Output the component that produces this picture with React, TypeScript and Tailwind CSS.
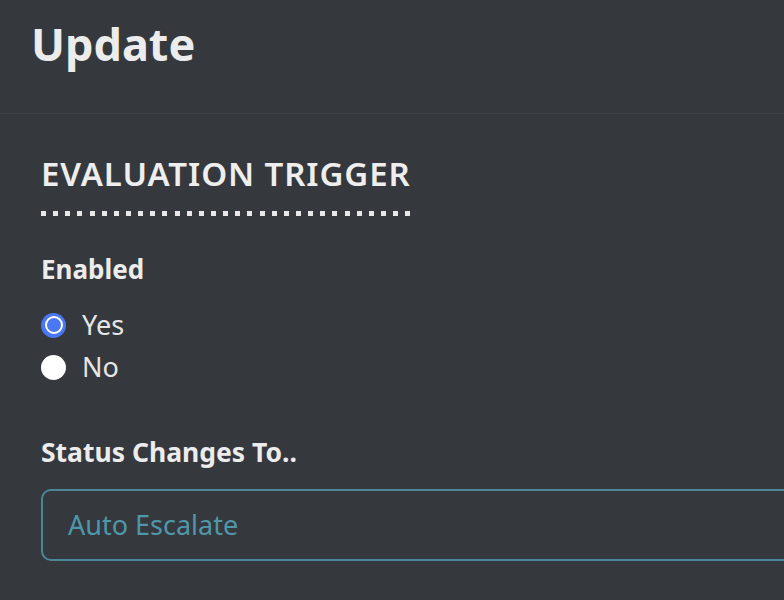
import { useState } from 'react';

export default function App() {
  const [enabled, setEnabled] = useState('yes');

  return (
    <div className="min-h-[600px] w-full bg-[#35383d] text-[#ededed] overflow-hidden" style={{ fontFamily: '"Noto Sans", sans-serif' }}>
      {/* Header */}
      <div className="h-[114px] border-b border-[#3e4146] px-[31px] pt-[14px]">
        <h1 className="text-[45px] font-bold leading-[60px] text-[#ececec]">Update</h1>
      </div>

      <div className="pl-[41px] pt-[40px]">
        {/* Section title */}
        <div className="w-fit">
          <h2 className="text-[33px] font-semibold leading-[40px] text-[#eeeeee] tracking-[0.9px]">EVALUATION TRIGGER</h2>
          <div className="mt-[17px] flex justify-between">
            {Array.from({ length: 31 }).map((_, i) => (
              <span key={i} className="block w-[5px] h-[5px] bg-[#e8e8e8]" />
            ))}
          </div>
        </div>

        {/* Enabled */}
        <div className="mt-[38px] text-[26px] font-bold leading-[30px] text-[#ececec]">Enabled</div>
        <div className="mt-[26px] flex flex-col gap-[12px]">
          {[
            { v: 'yes', label: 'Yes' },
            { v: 'no', label: 'No' },
          ].map(o => (
            <label key={o.v} className="flex items-center gap-[16px] h-[30px] cursor-pointer" onClick={() => setEnabled(o.v)}>
              {enabled === o.v ? (
                <span className="w-[25px] h-[25px] rounded-full bg-[#4a78f5] flex items-center justify-center">
                  <span className="w-[18px] h-[18px] rounded-full border-[2px] border-white" />
                </span>
              ) : (
                <span className="w-[25px] h-[25px] rounded-full bg-white" />
              )}
              <span className="text-[27px] leading-[30px] text-[#e6e6e6]">{o.label}</span>
            </label>
          ))}
        </div>

        {/* Status */}
        <div className="mt-[55px] text-[26.5px] font-bold leading-[30px] text-[#ececec]">Status Changes To..</div>
        <div className="mt-[22px] h-[72px] w-[800px] rounded-[10px] border-2 border-[#4b8799] flex items-center pl-[25px]">
          <span className="text-[27px] text-[#4f97aa]">Auto Escalate</span>
        </div>
      </div>
    </div>
  );
}
